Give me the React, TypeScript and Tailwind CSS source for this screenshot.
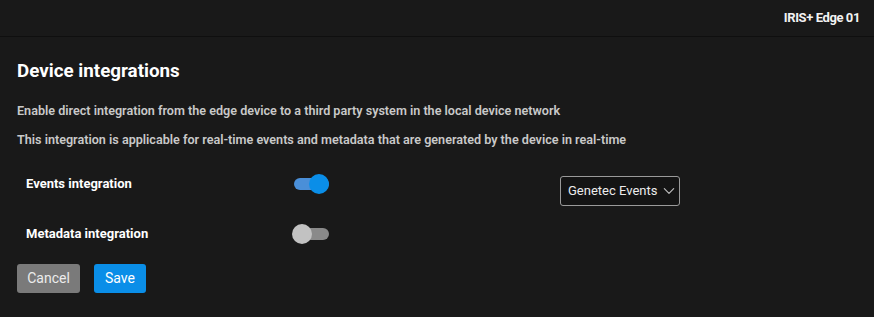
const Toggle = ({ on }: { on: boolean }) => {
  return (
    <div className="relative w-[39px] h-5 flex items-center">
      <div className={`ml-[2px] w-[35px] h-3 rounded-full ${on ? "bg-[#4a8fd8]" : "bg-[#8a8a8a]"}`} />
      <div
        className={`absolute top-0 w-5 h-5 rounded-full ${on ? "left-[17px] bg-[#0a8ee8]" : "left-0 bg-[#c2c2c2]"}`}
      />
    </div>
  );
};

const App = () => {
  return (
    <div className="w-[874px] h-[317px] bg-[#191919] text-white font-['Roboto',sans-serif]">
      {/* Top bar */}
      <header className="h-[37px] border-b border-[#0f0f0f] flex items-center justify-end pr-[14px]">
        <span className="text-[13px] font-bold tracking-[-0.4px] text-[#f2f2f2]">IRIS+ Edge 01</span>
      </header>

      <main className="px-[17px] pt-[22px]">
        <h1 className="text-[18.8px] font-bold leading-6 text-white">Device integrations</h1>
        <p className="mt-[20px] text-[12.6px] font-semibold leading-4 text-[#c9c9c9] whitespace-nowrap">
          Enable direct integration from the edge device to a third party system in the local device network
        </p>
        <p className="mt-[13px] text-[12.6px] font-semibold leading-4 text-[#c9c9c9] whitespace-nowrap">
          This integration is applicable for real-time events and metadata that are generated by the device in real-time
        </p>

        <div className="mt-[21px] pl-[9px] grid grid-cols-[266px_268px_auto] items-center gap-y-[25px]">
          <span className="text-[13px] font-bold">Events integration</span>
          <Toggle on />
          <div className="relative top-[7px] w-[120px] h-[30px] border border-[#9a9a9a] rounded-[3px] bg-[#141414] flex items-center justify-between pl-[7px] pr-[3px]">
            <span className="text-[13px] text-[#ececec] whitespace-nowrap">Genetec Events</span>
            <svg width="14" height="14" viewBox="0 0 24 24" fill="none" stroke="#bdbdbd" strokeWidth="2" strokeLinecap="round" strokeLinejoin="round">
              <path d="M4 8l8 8 8-8" />
            </svg>
          </div>

          <span className="text-[13px] font-bold">Metadata integration</span>
          <Toggle on={false} />
          <div />
        </div>

        <div className="mt-[20px] flex gap-[14px]">
          <button className="w-[63px] h-[29px] rounded-[3px] bg-[#7a7a7a] text-[14px] text-[#ececec]">Cancel</button>
          <button className="w-[52px] h-[29px] rounded-[3px] bg-[#0a8ee8] text-[14px] text-white">Save</button>
        </div>
      </main>
    </div>
  );
};

export default App;
